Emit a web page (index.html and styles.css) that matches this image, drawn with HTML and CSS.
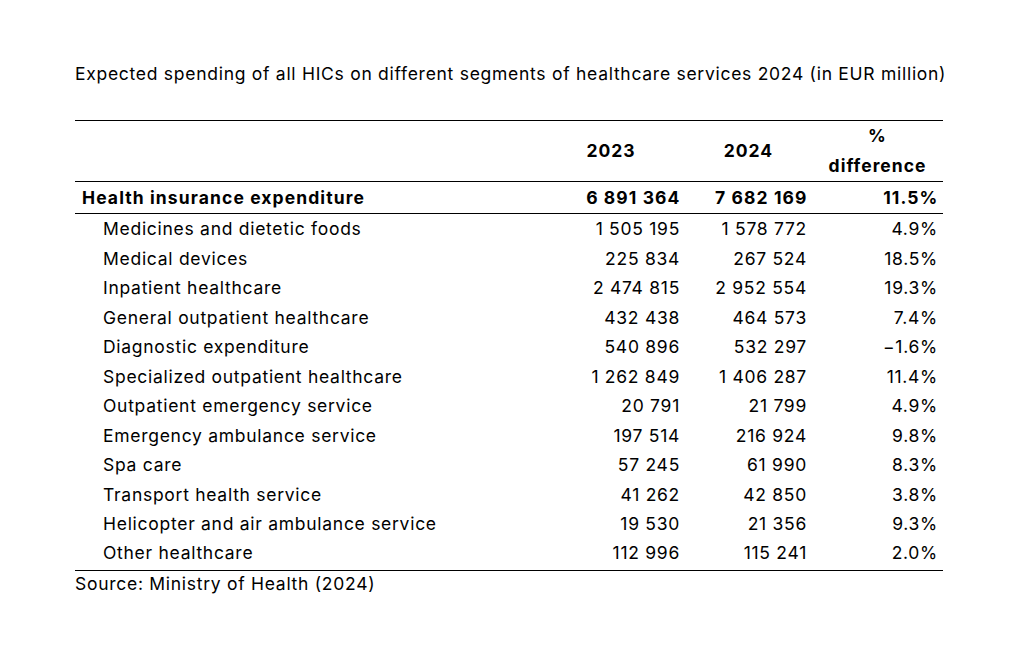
FILE: index.html
```html
<!DOCTYPE html>
<html>
<head>
<meta charset="utf-8">
<link rel="stylesheet" href="styles.css">
</head>
<body>
<div class="page">
  <div class="title">Expected spending of all HICs on different segments of healthcare services 2024 (in EUR million)</div>
  <table class="data">
    <colgroup>
      <col class="c-label"><col class="c-num1"><col class="c-num2"><col class="c-num3">
    </colgroup>
    <thead>
      <tr class="head">
        <th></th>
        <th class="hc">2023</th>
        <th class="hc">2024</th>
        <th class="hc">%<br>difference</th>
      </tr>
    </thead>
    <tbody>
      <tr class="total">
        <td class="lbl">Health insurance expenditure</td>
        <td class="num">6 891 364</td>
        <td class="num">7 682 169</td>
        <td class="num">11.5%</td>
      </tr>
      <tr class="first"><td class="lbl sub">Medicines and dietetic foods</td><td class="num">1 505 195</td><td class="num">1 578 772</td><td class="num">4.9%</td></tr>
      <tr><td class="lbl sub">Medical devices</td><td class="num">225 834</td><td class="num">267 524</td><td class="num">18.5%</td></tr>
      <tr><td class="lbl sub">Inpatient healthcare</td><td class="num">2 474 815</td><td class="num">2 952 554</td><td class="num">19.3%</td></tr>
      <tr><td class="lbl sub">General outpatient healthcare</td><td class="num">432 438</td><td class="num">464 573</td><td class="num">7.4%</td></tr>
      <tr><td class="lbl sub">Diagnostic expenditure</td><td class="num">540 896</td><td class="num">532 297</td><td class="num">−1.6%</td></tr>
      <tr><td class="lbl sub">Specialized outpatient healthcare</td><td class="num">1 262 849</td><td class="num">1 406 287</td><td class="num">11.4%</td></tr>
      <tr><td class="lbl sub">Outpatient emergency service</td><td class="num">20 791</td><td class="num">21 799</td><td class="num">4.9%</td></tr>
      <tr><td class="lbl sub">Emergency ambulance service</td><td class="num">197 514</td><td class="num">216 924</td><td class="num">9.8%</td></tr>
      <tr><td class="lbl sub">Spa care</td><td class="num">57 245</td><td class="num">61 990</td><td class="num">8.3%</td></tr>
      <tr><td class="lbl sub">Transport health service</td><td class="num">41 262</td><td class="num">42 850</td><td class="num">3.8%</td></tr>
      <tr><td class="lbl sub">Helicopter and air ambulance service</td><td class="num">19 530</td><td class="num">21 356</td><td class="num">9.3%</td></tr>
      <tr class="last"><td class="lbl sub">Other healthcare</td><td class="num">112 996</td><td class="num">115 241</td><td class="num">2.0%</td></tr>
    </tbody>
  </table>
  <div class="source">Source: Ministry of Health (2024)</div>
</div>
</body>
</html>
```
FILE: styles.css
```css
html, body {
  margin: 0;
  padding: 0;
  background: #ffffff;
}
body {
  font-family: Inter, "Liberation Sans", Arial, sans-serif;
  color: #000000;
  font-size: 17.5px;
  letter-spacing: 0.72px;
}
.page {
  width: 868px;
  padding: 62px 0 0 75px;
}
.title {
  line-height: 24px;
  white-space: nowrap;
}
.data {
  margin-top: 34px;
  width: 868px;
  border-collapse: collapse;
  table-layout: fixed;
  border-top: 1px solid #000;
  border-bottom: 1px solid #000;
}
.c-label { width: 462px; }
.c-num1 { width: 148px; }
.c-num2 { width: 127px; }
.c-num3 { width: 131px; }
.head th {
  height: 60px;
  padding: 0;
  font-weight: bold;
  letter-spacing: 1px;
  line-height: 30px;
  text-align: center;
  vertical-align: middle;
  border-bottom: 1px solid #000;
}
.total td {
  height: 31px;
  font-weight: bold;
  letter-spacing: 1.1px;
  border-bottom: 1px solid #000;
}
td {
  padding: 0;
  height: 29.5px;
  vertical-align: middle;
  white-space: nowrap;
}
.last td {
  height: 31px;
  vertical-align: top;
  line-height: 27px;
}
.lbl { padding-left: 7px; }
.lbl.sub { padding-left: 28px; }
.num { text-align: right; padding-right: 5px; }
.total .num { padding-right: 4.5px; }
.source {
  line-height: 26px;
}
```
